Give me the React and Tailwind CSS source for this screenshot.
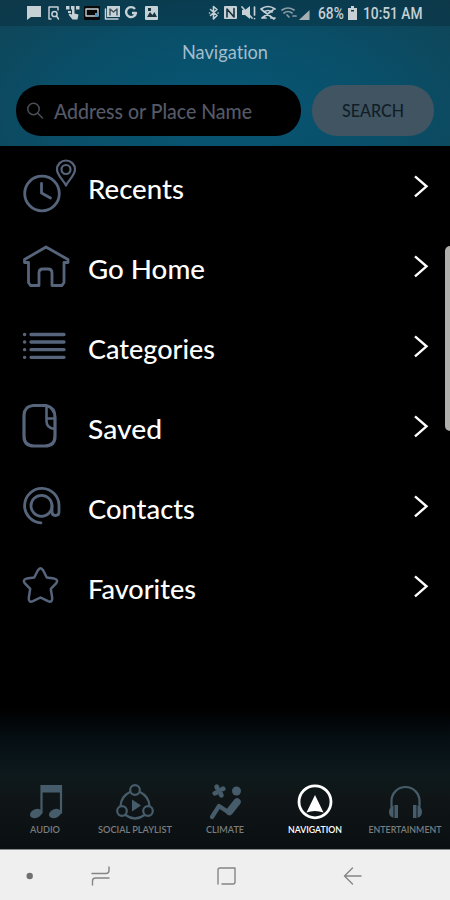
import React from "react";

const line = {
  fill: "none",
  stroke: "currentColor",
  strokeLinecap: "round",
  strokeLinejoin: "round",
};

function StatusBar() {
  return (
    <div className="flex h-[26px] items-center bg-[#071e2b]/30 text-[#c6d0d5]">
      <svg className="h-[26px] w-[310px] shrink-0" viewBox="0 0 310 26">
        <path fill="currentColor" d="M27 6h14v11H31l-4 3z" />
        <g {...line} strokeWidth="1.5">
          <path d="M51 19h-2V7h9v3" />
          <circle cx="54.5" cy="14" r="2.6" />
          <path d="m56.5 16 2 3" />
        </g>
        <path fill="currentColor" d="M66 6h3.5v3.5H66zM71 6h3.5v3.5H71zM76 6h3.5v3.5H76zM68 11h3v2h-3zM72 9h2.5v4.5l4 1-1 5h-5l-4-5 1-1 2.5 1z" />
        <rect x="84" y="6" width="16" height="14" rx="1" fill="#080808" />
        <rect x="86" y="9" width="12" height="7" {...line} strokeWidth="1.4" />
        <path fill="#4b9bd0" d="M95 13h3v4h-3z" />
        <path fill="currentColor" d="M107 6h13v11h-13z" />
        <path d="M110 15V9l3.5 3L117 9v6" {...line} stroke="#40535e" strokeWidth="1.4" />
        <path d="M105.5 9v10H118" {...line} strokeWidth="1.5" />
        <path d="M135 9a5 5 0 1 0 1 4h-4" {...line} strokeLinecap="butt" strokeWidth="2.4" />
        <rect x="145" y="6" width="13" height="14" rx="1" fill="currentColor" />
        <path fill="#183441" d="m147 17 3-5 2.5 3 2-3 2.5 5zM148 8h3v3h-3z" />
        <path d="m210.5 9.5 6.5 6-3.5 3.5V6.5l3.5 3-6.5 6M209.5 13h.1M218 13h.1" {...line} strokeWidth="1.6" />
        <rect x="224" y="6" width="13" height="13" rx="1" fill="currentColor" />
        <path d="M227 17V9l7 8V8.5" {...line} stroke="#173340" strokeWidth="1.6" />
        <path fill="currentColor" d="M242 10h3l5-4v13l-5-4h-3z" />
        <path d="m242 7 10 11M254.5 7v8M254.5 18.5v.1" {...line} strokeWidth="1.7" />
        <path d="M261 9q7-5 14 0M264 12q4-3 8 0M262 18l11-8M262 10l12 9M262 18h4M271 18h4" {...line} strokeWidth="1.7" />
        <path d="M282 10q6-4 12 0M284 13q4-3 8 0M287 15l2 2M293 16h3" {...line} stroke="#8b9ba3" strokeWidth="1.7" />
        <path fill="#63747d" d="m299 20 14-13v13z" />
        <path fill="#a5b0b5" d="m299 20 10-9.300v9.300z" />
      </svg>
      <span className="ml-[8px] w-[28px] origin-left scale-x-[0.86] whitespace-nowrap pt-[2px] font-['Roboto',sans-serif] text-[16px] font-medium leading-none">68%</span>
      <svg className="ml-[2px] h-[14px] w-[9px] shrink-0" viewBox="0 0 9 14">
        <path fill="currentColor" d="M3 0h3v2h3v12H0V2h3z" />
        <path fill="#163847" d="M3 4h3v1.5H3z" />
      </svg>
      <span className="ml-[6px] origin-left scale-x-[0.86] whitespace-nowrap pt-[2px] font-['Roboto',sans-serif] text-[16px] font-medium leading-none">10:51 AM</span>
    </div>
  );
}

function MenuIcon({ name }) {
  return (
    <svg className="h-[80px] w-[88px] shrink-0 text-[#56657b]" viewBox="0 0 88 80" {...line} strokeWidth="2.8">
      {name === "Recents" && (
        <>
          <circle cx="42" cy="47.5" r="17.3" />
          <path d="M41.5 37.5V47l9 5" />
          <g strokeWidth="2.2">
            <path d="M66 39.5c-2-5-9-10-9-16a9 9 0 0 1 18 0c0 6-7 11-9 16z" />
            <circle cx="66" cy="23.5" r="4.5" />
          </g>
        </>
      )}
      {name === "Go Home" && (
        <path d="M46 21 24.5 33.5v3h4v20l2 3H39V47q0-4 4-4h5q4 0 4 4v12.5h10l2-3v-20h4v-3z" />
      )}
      {name === "Categories" && (
        <path d="M31 28.5h33M31 36h33M31 43.7h33M31 51.3h33M24.5 28.5h.2M24.5 36h.2M24.5 43.7h.2M24.5 51.3h.2" strokeWidth="3.3" />
      )}
      {name === "Saved" && (
        <>
          <path d="M33 19.5h13q9 2 9 12V50q0 10-10 10H34q-10 0-10-10V29.5q0-9 9-10z" strokeWidth="3.2" />
          <path d="M46.5 20v15q0 7 8 8M47.5 32.5H54" strokeWidth="2.6" />
        </>
      )}
      {name === "Contacts" && (
        <>
          <path d="M41 56.8a17.2 17.2 0 1 1 18-17.1V46q0 3.500-3.500 3.500T52 46v-6" />
          <circle cx="41.5" cy="39.8" r="10.5" />
        </>
      )}
      {name === "Favorites" && (
        <path d="M37.8 24.5q2.7-4.5 5.4 0l3.6 7 7.5 1.1q4.6 1.2 1.8 4.8l-5.3 5.5 1.4 9q.4 5-4.2 3.3l-7.5-3.7-7.500 3.700q-4.600 1.700-4.200-3.300l1.400-9-5.300-5.500q-2.800-3.600 1.800-4.800l7.500-1.100z" strokeWidth="2.5" />
      )}
    </svg>
  );
}

const menu = [
  { name: "Recents", width: 96 },
  { name: "Go Home", width: 117 },
  { name: "Categories", width: 127 },
  { name: "Saved", width: 74 },
  { name: "Contacts", width: 107 },
  { name: "Favorites", width: 108 },
];

function MenuRow({ name, width }) {
  return (
    <button className="flex h-20 w-full items-center text-left text-white">
      <MenuIcon name={name} />
      <svg className="h-12 w-[140px]" viewBox="0 0 140 48">
        <text x="0" y="36.5" textLength={width} lengthAdjust="spacingAndGlyphs" fill="currentColor" className="font-['Lato',sans-serif] text-[27px] font-medium">{name}</text>
      </svg>
      <svg className="ml-auto mr-[21px] h-6 w-[15px]" viewBox="0 0 15 24" {...line} strokeLinecap="butt" strokeLinejoin="miter" strokeWidth="2.4">
        <path d="m1 2.3 11.5 10L1 22.3" />
      </svg>
    </button>
  );
}

const tabs = [
  { name: "AUDIO", width: 30 },
  { name: "SOCIAL PLAYLIST", width: 74 },
  { name: "CLIMATE", width: 38 },
  { name: "NAVIGATION", width: 54 },
  { name: "ENTERTAINMENT", width: 73 },
];

function TabIcon({ name }) {
  return (
    <svg className="h-[40px] w-[42px]" viewBox="0 0 42 40" {...line} strokeWidth="2.2">
      {name === "AUDIO" && (
        <>
          <path d="M17.5 31V4H37v27" strokeLinejoin="miter" />
          <path d="M17 3h20v7.5H17z" fill="currentColor" stroke="none" />
          <ellipse cx="12" cy="31.5" rx="6.3" ry="4.4" transform="rotate(-23 12 31.5)" fill="currentColor" stroke="none" />
          <ellipse cx="31" cy="31.5" rx="6.3" ry="4.4" transform="rotate(-23 31 31.5)" fill="currentColor" stroke="none" />
        </>
      )}
      {name === "SOCIAL PLAYLIST" && (
        <>
          <circle cx="21" cy="8" r="4.8" />
          <circle cx="8" cy="29" r="4.8" />
          <circle cx="34" cy="29" r="4.8" />
          <path d="M16 10Q7 14.5 6.5 24M26 10q9 4.5 9.5 14M11.5 33q9.5 7 19 0" />
          <path d="m18 17.5 9 6-9 6z" fill="currentColor" stroke="none" />
        </>
      )}
      {name === "CLIMATE" && (
        <>
          <g fill="currentColor" stroke="none">
            <ellipse cx="13" cy="5.5" rx="2.5" ry="3.2" transform="rotate(-20 13 5.5)" />
            <ellipse cx="18.5" cy="7" rx="3.2" ry="2.5" transform="rotate(-20 18.5 7)" />
            <ellipse cx="17" cy="12.5" rx="2.5" ry="3.2" transform="rotate(-20 17 12.5)" />
            <ellipse cx="11.5" cy="11" rx="3.2" ry="2.5" transform="rotate(-20 11.5 11)" />
            <circle cx="15" cy="9" r="1.9" />
            <circle cx="32.5" cy="9" r="4.5" />
          </g>
          <path d="m8 35 7-11 9 6" strokeWidth="4.2" />
          <path d="m25.5 29.500 7.500-9.500" strokeWidth="7.5" />
        </>
      )}
      {name === "NAVIGATION" && (
        <>
          <circle cx="21" cy="19.8" r="16" strokeWidth="2.8" />
          <path d="m21 13-8.5 17.5q8.5-3 17 0z" fill="currentColor" stroke="none" />
        </>
      )}
      {name === "ENTERTAINMENT" && (
        <>
          <path d="M7.5 25v-6a14 14 0 0 1 28 0v6" />
          <path d="M9.500 23.5v12.300q-4.500-1-4.500-5.800t4.500-6.500zM10.500 23h3.500v13h-3.500zM33.500 23.500v12.300q4.500-1 4.500-5.800t-4.500-6.500zM29 23h3.500v13H29z" fill="currentColor" stroke="none" />
        </>
      )}
    </svg>
  );
}

function TabBar() {
  return (
    <nav className="flex h-[139px] bg-[linear-gradient(180deg,#000000_0%,#050e13_20%,#0a161a_38%,#0d191b_48%,#101617_62%,#0a0f11_100%)] pt-[72px]">
      {tabs.map((tab) => (
        <button key={tab.name} className={tab.name === "NAVIGATION" ? "flex w-[90px] flex-col items-center text-white" : "flex w-[90px] flex-col items-center text-[#465c6a]"}>
          <TabIcon name={tab.name} />
          <svg className={tab.name === "NAVIGATION" ? "h-5 w-[90px] text-white" : "h-5 w-[90px] text-[#7a7d7f]"} viewBox="0 0 90 20">
            <text x={(90 - tab.width) / 2} y="11" textLength={tab.width} lengthAdjust="spacingAndGlyphs" fill="currentColor" className="font-['Lato',sans-serif] text-[9.5px] font-semibold">{tab.name}</text>
          </svg>
        </button>
      ))}
    </nav>
  );
}

function SystemNav() {
  return (
    <div className="h-[51px] border-t border-[#8b8b8b] bg-[#efefef] text-[#858585]">
      <svg className="h-[50px] w-full" viewBox="0 0 450 50" {...line} strokeWidth="1.4">
        <circle cx="29.7" cy="26" r="3.2" fill="#707070" stroke="none" />
        <path d="M92 23.5h14q3 0 3-3V17M109 28H95.5q-3 0-3 3v4" />
        <path d="M218 34V20q0-2 2-2h15v14q0 2-2 2h-11" />
        <path d="M361 26h-16.5M352.5 18l-8 8 8 8" />
      </svg>
    </div>
  );
}

export default function App() {
  return (
    <div className="relative flex h-[900px] w-[450px] flex-col overflow-hidden bg-black">
      <header className="h-[146px] bg-[radial-gradient(ellipse_at_50%_75%,#075675_0%,#094f69_50%,#104456_100%)]">
        <StatusBar />
        <div className="flex h-[59px] items-center justify-center text-[#a2bdcb]">
          <svg className="h-[40px] w-[110px]" viewBox="0 0 110 40">
            <text x="12" y="22.5" textLength="86" lengthAdjust="spacingAndGlyphs" fill="currentColor" className="font-['Lato',sans-serif] text-[20px] [font-variant-ligatures:none]">Navigation</text>
          </svg>
        </div>
        <div className="flex gap-[11px] pl-[16px]">
          <div className="flex h-[51px] w-[285px] items-center rounded-[25px] bg-black">
            <svg className="ml-[10px] h-5 w-5 text-[#4c5058]" viewBox="0 0 20 20" {...line} strokeWidth="1.5">
              <circle cx="7.5" cy="8" r="5.7" />
              <path d="m11.5 12 5 5" />
            </svg>
            <svg className="h-10 w-[220px] text-[#555967]" viewBox="0 0 220 40">
              <text x="8" y="28" textLength="198" lengthAdjust="spacingAndGlyphs" fill="currentColor" className="font-['Lato',sans-serif] text-[20.5px] font-medium">Address or Place Name</text>
            </svg>
          </div>
          <button className="flex h-[51px] w-[122px] items-center justify-center rounded-[25px] bg-[#405461] text-[#101e28]">
            <svg className="h-9 w-[90px]" viewBox="0 0 90 36">
              <text x="14" y="24" textLength="62" lengthAdjust="spacingAndGlyphs" fill="currentColor" className="font-['Lato',sans-serif] text-[16.5px] font-medium">SEARCH</text>
            </svg>
          </button>
        </div>
      </header>
      <main className="h-[564px] shrink-0 bg-black">
        {menu.map((item) => (
          <MenuRow key={item.name} name={item.name} width={item.width} />
        ))}
      </main>
      <TabBar />
      <SystemNav />
      <div className="absolute right-0 top-[246px] h-[185px] w-[5px] rounded-l-[5px] bg-[#b1afac]" />
    </div>
  );
}
